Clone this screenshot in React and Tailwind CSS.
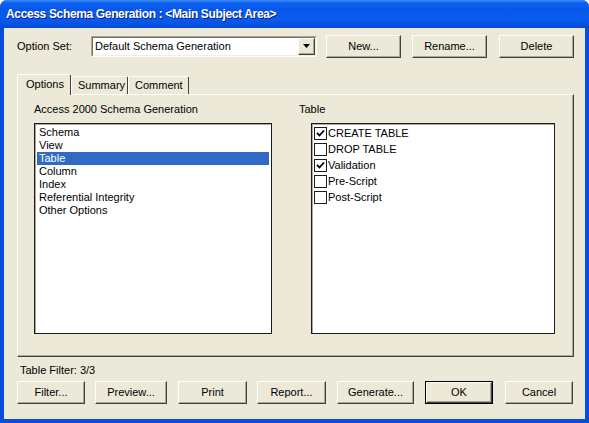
import React from 'react';

const raised =
  'border border-t-white border-l-white border-r-[#404040] border-b-[#404040] shadow-[inset_-1px_-1px_0_#aca899] bg-[#ece9d8]';
const sunken =
  'border border-t-[#aca899] border-l-[#aca899] border-r-white border-b-white';

const Btn = ({ label, className = '', def = false }) =>
  def ? (
    <div className={`${className} h-[23px] border border-black flex`}>
      <div className={`${raised} flex-1 flex items-center justify-center`}>{label}</div>
    </div>
  ) : (
    <div className={`${className} h-[23px] ${raised} flex items-center justify-center`}>{label}</div>
  );

const Check = ({ on }) => (
  <div className="w-[13px] h-[13px] border border-[#1c1c1c] bg-white flex items-center justify-center shrink-0">
    {on && (
      <svg width="9" height="9" viewBox="0 0 9 9">
        <polyline points="1,4 3.5,6.5 8,1.5" fill="none" stroke="#000" strokeWidth="1.8" />
      </svg>
    )}
  </div>
);

const listItems = ['Schema', 'View', 'Table', 'Column', 'Index', 'Referential Integrity', 'Other Options'];
const checkItems = [
  ['CREATE TABLE', true],
  ['DROP TABLE', false],
  ['Validation', true],
  ['Pre-Script', false],
  ['Post-Script', false],
];

export default function App() {
  return (
    <div className="w-[589px] h-[423px] bg-white font-['Liberation_Sans',Arial,sans-serif] text-[11px] text-black leading-[13px]">
      <div className="w-full h-full flex flex-col rounded-t-[7px] overflow-hidden bg-[#0a4cdc]">
        {/* Title bar */}
        <div className="h-[28px] shrink-0 flex items-center pl-[6px] bg-[linear-gradient(to_bottom,#3d8ef8_0%,#0f62f0_10%,#0558ea_35%,#0a5cf0_65%,#0450e0_90%,#0a46c8_100%)]">
          <span className="text-white font-bold text-[12px] tracking-[-0.35px] [text-shadow:1px_1px_0_#0a1e78]">
            Access Schema Generation : &lt;Main Subject Area&gt;
          </span>
        </div>

        {/* Body */}
        <div className="flex-1 mx-[4px] mb-[4px] bg-[#ece9d8] flex flex-col pl-[13px] pr-[11px]">
          {/* Option set row */}
          <div className="mt-[6px] h-[24px] flex items-center">
            <div className="w-[74px]">Option Set:</div>
            <div className={`w-[226px] h-[21px] ${sunken} flex`}>
              <div className="flex-1 border border-t-[#716f64] border-l-[#716f64] border-r-[#f1efe2] border-b-[#f1efe2] bg-white flex items-center">
                <span className="pl-[2px] flex-1">Default Schema Generation</span>
                <div className={`w-[17px] h-[17px] ${raised} flex items-center justify-center`}>
                  <svg width="7" height="4" viewBox="0 0 7 4">
                    <polygon points="0,0 7,0 3.5,4" fill="#000" />
                  </svg>
                </div>
              </div>
            </div>
            <Btn label="New..." className="ml-[9px] w-[75px]" />
            <Btn label="Rename..." className="ml-[11px] w-[75px]" />
            <Btn label="Delete" className="ml-[12px] w-[75px]" />
          </div>

          {/* Tabs */}
          <div className="mt-[16px] h-[20px] flex items-end relative z-10">
            <div className="w-[54px] h-[21px] -mb-px bg-[#ece9d8] border-t border-l border-white border-r border-r-[#404040] rounded-t-[2px] flex items-center pl-[8px] pb-[2px]">
              Options
            </div>
            <div className="w-[57px] h-[18px] border-t border-l border-white border-r border-r-[#404040] rounded-t-[2px] flex items-center pl-[6px]">
              Summary
            </div>
            <div className="w-[61px] h-[18px] border-t border-l border-white border-r border-r-[#404040] rounded-t-[2px] flex items-center pl-[6px]">
              Comment
            </div>
          </div>

          {/* Tab panel */}
          <div className="h-[263px] border border-t-white border-l-white border-r-[#404040] border-b-[#404040] shadow-[inset_-1px_-1px_0_#aca899] flex pl-[16px] pt-[8px]">
            <div className="w-[265px] flex flex-col">
              <div className="h-[13px]">Access 2000 Schema Generation</div>
              <div className="mt-[7px] w-[238px] h-[211px] border border-[#1c1c1c] shadow-[inset_1px_1px_0_#aca899] bg-white p-[2px]">
                {listItems.map((t) => (
                  <div
                    key={t}
                    className={`h-[13px] pl-[2px] ${t === 'Table' ? 'bg-[#316ac5] text-white' : ''}`}
                  >
                    {t}
                  </div>
                ))}
              </div>
            </div>
            <div className="flex flex-col">
              <div className="h-[13px]">Table</div>
              <div className="mt-[7px] ml-[12px] w-[244px] h-[211px] border border-[#1c1c1c] shadow-[inset_1px_1px_0_#aca899] bg-white pl-[2px] pt-[1px]">
                {checkItems.map(([t, on]) => (
                  <div key={t} className="h-[16px] flex items-center gap-[1px]">
                    <Check on={on} />
                    <span>{t}</span>
                  </div>
                ))}
              </div>
            </div>
          </div>

          <div className="mt-[7px] pl-[3px] h-[13px]">Table Filter: 3/3</div>

          {/* Bottom buttons */}
          <div className="mt-[4px] flex">
            <Btn label="Filter..." className="w-[68px]" />
            <Btn label="Preview..." className="ml-[10px] w-[72px]" />
            <Btn label="Print" className="ml-[11px] w-[69px]" />
            <Btn label="Report..." className="ml-[10px] w-[69px]" />
            <Btn label="Generate..." className="ml-[11px] w-[77px]" />
            <Btn label="OK" def className="ml-[11px] w-[68px]" />
            <Btn label="Cancel" className="ml-[12px] w-[68px]" />
          </div>
        </div>
      </div>
    </div>
  );
}
